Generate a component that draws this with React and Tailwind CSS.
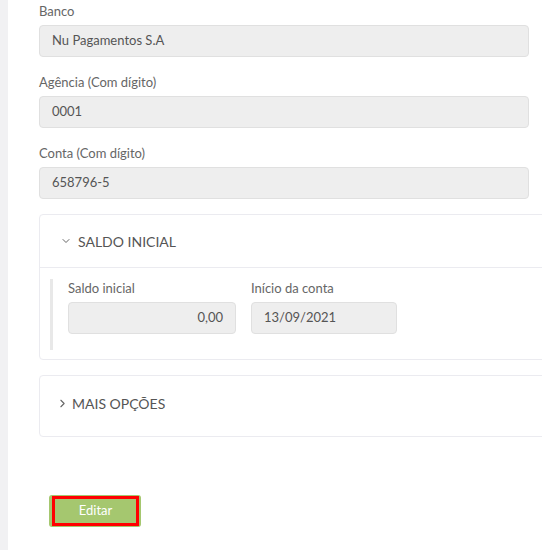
import { ChevronDown, ChevronRight } from 'lucide-react'

function Field({ label, value }) {
  return (
    <div>
      <div className="text-[13px] leading-[16px] text-[#666] mb-[6px]">{label}</div>
      <div className="h-[32px] rounded-[4px] border border-[#e0e0e0] bg-[#eeeeee] flex items-center pl-[12px] text-[13px] text-[#555]">
        {value}
      </div>
    </div>
  )
}

export default function App() {
  return (
    <div className="h-[550px] w-[542px] overflow-hidden flex bg-white" style={{ fontFamily: 'Lato, "Noto Sans", sans-serif' }}>
      <div className="w-[8px] shrink-0 bg-[#f1f1f3]" />
      <div className="flex-1 pl-[31px] pr-[13px] pt-[3px]">
        <div className="flex flex-col gap-[17px]">
          <Field label="Banco" value="Nu Pagamentos S.A" />
          <Field label="Agência (Com dígito)" value="0001" />
          <Field label="Conta (Com dígito)" value="658796-5" />
        </div>

        <div className="mt-[15px] mr-[-40px] rounded-[4px] border border-[#ebebf0]">
          <div className="h-[53px] flex items-center pl-[20px] gap-[6px] border-b border-[#ebebf0] text-[14px] text-[#555]">
            <ChevronDown size={12} strokeWidth={2} className="text-[#666]" />
            <span>SALDO INICIAL</span>
          </div>
          <div className="pl-[10px] pt-[11px] pb-[9px]">
            <div className="border-l-[3px] border-[#e8e8e8] pl-[15px] pb-[16px] flex gap-[15px]">
              <div className="w-[168px]">
                <div className="text-[13px] leading-[16px] text-[#666] mt-[1px] mb-[6px]">Saldo inicial</div>
                <div className="h-[32px] rounded-[4px] border border-[#e0e0e0] bg-[#eeeeee] flex items-center justify-end pr-[12px] text-[13px] text-[#555]">
                  0,00
                </div>
              </div>
              <div className="w-[146px]">
                <div className="text-[13px] leading-[16px] text-[#666] mt-[1px] mb-[6px]">Início da conta</div>
                <div className="h-[32px] rounded-[4px] border border-[#e0e0e0] bg-[#eeeeee] flex items-center pl-[12px] text-[13px] text-[#555]">
                  13/09/2021
                </div>
              </div>
            </div>
          </div>
        </div>

        <div className="mt-[15px] mr-[-40px] h-[62px] rounded-[4px] border border-[#ebebf0] flex items-center pl-[16px] pb-[5px] gap-[3px] text-[14px] text-[#555]">
          <ChevronRight size={13} strokeWidth={2} className="text-[#666]" />
          <span>MAIS OPÇÕES</span>
        </div>

        <div className="mt-[58px] ml-[10px] w-[92px] h-[32px] rounded-[3px] bg-[#a5c76f] pl-[3px] pr-[2px] pt-[1px] pb-[1px]">
          <button className="w-full h-full border-[3px] border-[#ff0000] bg-[#a5c76f] text-white text-[13px] flex items-center justify-center">
            Editar
          </button>
        </div>
      </div>
    </div>
  )
}
